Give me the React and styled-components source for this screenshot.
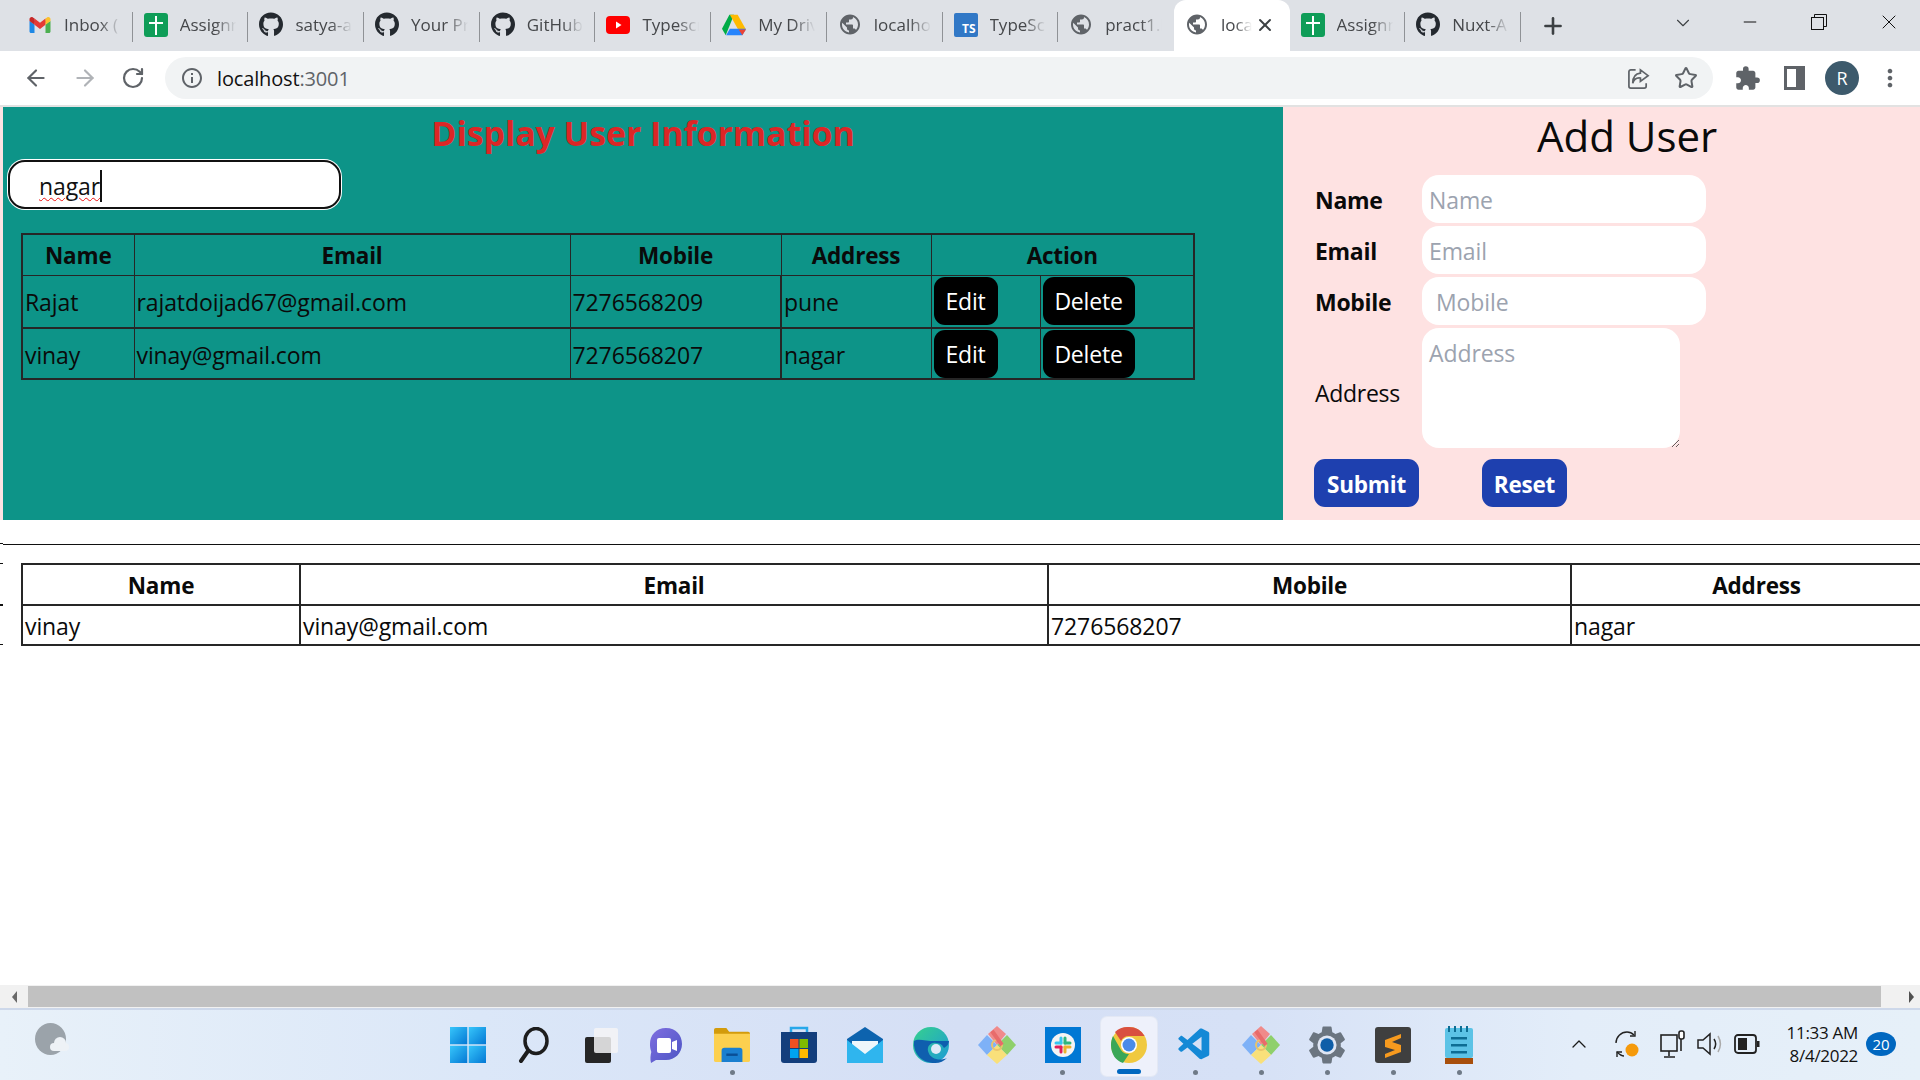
import React from 'react';
import styled, { createGlobalStyle } from 'styled-components';
import { FaGithub } from 'react-icons/fa';
import { MdPublic, MdExtension, MdMoreVert, MdInfoOutline } from 'react-icons/md';
import { VscVscode } from 'react-icons/vsc';
import { ArrowLeft, ArrowRight, RotateCw, Plus, X, Minus, ChevronDown, ChevronUp, Star } from 'lucide-react';

const Global = createGlobalStyle`
  html, body { margin: 0; padding: 0; background: #fff; overflow: hidden; }
  * { box-sizing: border-box; }
  body { font-family: "Open Sans", "Noto Sans", "Liberation Sans", sans-serif; }
`;

const Screen = styled.div`width:1920px;height:1080px;display:flex;flex-direction:column;overflow:hidden;`;

/* Browser tabs */
const TabBar = styled.div`height:51px;background:#dee1e6;display:flex;padding-left:17px;flex:none;`;
const TabItem = styled.div`
  width:115.7px;height:51px;flex:none;display:flex;align-items:center;padding-left:11px;padding-bottom:2px;position:relative;
  border-radius:${p => p.$active ? '12px 12px 0 0' : '0'};
  background:${p => p.$active ? '#fff' : 'transparent'};
  &::after{content:"";display:${p => p.$sep ? 'block' : 'none'};position:absolute;right:0;top:12px;height:30px;width:1px;background:#8f9296;}
`;
const Favicon = styled.div`width:24px;height:24px;flex:none;display:flex;align-items:center;justify-content:center;color:${p => p.$color || '#24292f'};`;
const TabTitle = styled.span`
  margin-left:12px;font-size:17px;color:#45474a;white-space:nowrap;flex:1;min-width:0;margin-right:${p => p.$right}px;
  mask-image:linear-gradient(to right,#000 ${p => p.$fade[0]}%,transparent ${p => p.$fade[1]}%);
`;
const TabClose = styled.div`position:absolute;right:15px;top:15px;color:#3c4043;display:flex;`;
const TsIcon = styled.div`width:24px;height:24px;background:#3178c6;color:#fff;font:700 12px "Open Sans",sans-serif;display:flex;align-items:flex-end;justify-content:flex-end;padding:0 2px 0 0;border-radius:2px;line-height:16px;`;
const NewTab = styled.div`margin-left:19px;width:26px;height:51px;display:flex;align-items:center;color:#3c4043;`;
const TabChevron = styled.div`margin-left:106px;width:48px;display:flex;padding-top:12px;color:#3c4043;flex:none;`;
const WinBtn = styled.div`width:${p => p.$w}px;height:44px;display:flex;align-items:center;justify-content:center;color:#111;flex:none;`;

/* Toolbar */
const Toolbar = styled.div`height:54px;background:#fff;display:flex;align-items:center;flex:none;padding-left:12px;`;
const NavBtn = styled.div`width:${p => p.$w || 48}px;margin-left:${p => p.$ml || 0}px;display:flex;justify-content:center;align-items:center;color:${p => p.$color || '#5f6368'};flex:none;`;
const Omnibox = styled.div`width:1548px;margin-left:9px;height:42px;border-radius:21px;background:#f1f3f4;display:flex;align-items:center;padding-left:15px;padding-right:15px;flex:none;`;
const UrlText = styled.div`margin-left:13px;font-size:20px;color:#111;flex:1;letter-spacing:-.15px;span{color:#5f6368;}`;
const Avatar = styled.div`width:34px;height:34px;border-radius:50%;background:#3d5a6c;color:#fff;font-size:18px;display:flex;align-items:center;justify-content:center;`;
const Rule = styled.div`height:2px;background:#e2e2e2;flex:none;`;

/* Page */
const Viewport = styled.div`flex:1;min-height:0;display:flex;overflow:hidden;background:#fff;`;
const Gutter = styled.div`width:3px;flex:none;display:flex;flex-direction:column;`;
const GutterFill = styled.div`height:413px;background:#fee2e2;flex:none;`;
const Tick = styled.div`height:${p => p.$h || 1}px;margin-top:${p => p.$top}px;background:#111;flex:none;`;
const Page = styled.div`flex:1;min-width:0;overflow:hidden;`;
const Panels = styled.div`display:grid;grid-template-columns:1280px 1fr;height:413px;`;
const ListPanel = styled.section`background:#0d9488;`;
const Title = styled.h1`margin:0;height:52px;text-align:center;color:#dc2626;font-size:34px;line-height:52px;font-weight:700;letter-spacing:-.1px;`;
const SearchBox = styled.div`
  margin:1px 0 0 5px;width:333px;height:49px;background:#fff;border:2px solid #111;border-radius:17px;box-shadow:0 0 0 1px #fff;
  display:flex;align-items:center;padding-left:29px;padding-top:2px;
`;
const Typed = styled.span`font-size:23px;line-height:32px;color:#111;border-right:2px solid #111;letter-spacing:-.1px;text-decoration:underline wavy #ee1111 1px;text-underline-offset:2px;`;
const Table = styled.table`
  border-collapse:collapse;table-layout:fixed;width:${p => p.$w}px;margin:${p => p.$m};color:#0a0a0a;
  th,td{border:${p => p.$bw || 1}px solid #262626;padding:2px 2px 0;font-size:23px;text-align:left;letter-spacing:-.1px;white-space:nowrap;overflow:hidden;}
  th{text-align:center;font-weight:700;font-size:22.5px;letter-spacing:-.2px;}
  border:2px solid #262626;
`;
const HeadRow = styled.tr`height:${p => p.$h}px;`;
const BodyRow = styled.tr`
  height:${p => p.$h}px;
  td{border-bottom:${p => p.$thick ? '2px solid #262626' : ''};}
  td:nth-child(4){border-left:2px solid #262626;}
  td:nth-child(n+5){padding-top:0;}
`;
const ActionBtn = styled.button`
  height:48px;width:${p => p.$w}px;border:0;background:#000;color:#fff;border-radius:11px;font:400 23px "Open Sans",sans-serif;letter-spacing:-.2px;padding:0;display:block;
`;
const FormPanel = styled.section`background:#fee2e2;padding-left:32px;`;
const FormTitle = styled.h2`margin:0;height:68px;font-weight:400;font-size:42px;line-height:58px;color:#0a0a0a;padding-left:222px;`;
const FormGrid = styled.div`display:grid;grid-template-columns:107px auto;row-gap:3px;align-items:center;justify-content:start;`;
const Label = styled.label`font-size:23px;font-weight:${p => p.$bold ? 700 : 400};color:#0a0a0a;letter-spacing:-.3px;padding-top:${p => p.$top || 2}px;`;
const Field = styled.input`
  width:284px;height:48px;border:0;border-radius:17px;background:#fff;font:400 23px "Open Sans",sans-serif;padding:2px 0 0 ${p => p.$pad || 7}px;outline:none;letter-spacing:-.1px;
  &::placeholder{color:#9ca3af;opacity:1;}
`;
const Area = styled.textarea`
  width:258px;height:120px;border:0;border-radius:17px;background:#fff;font:400 23px/32px "Open Sans",sans-serif;padding:9px 7px;outline:none;resize:both;display:block;letter-spacing:-.1px;
  &::placeholder{color:#9ca3af;opacity:1;}
`;
const FormActions = styled.div`display:flex;margin-top:11px;margin-left:-1px;gap:63px;`;
const PrimaryBtn = styled.button`height:48px;width:${p => p.$w}px;border:0;border-radius:11px;background:#1e40af;color:#fff;font:700 22.500px "Open Sans",sans-serif;letter-spacing:-.2px;padding:2px 0 0;`;
const Divider = styled.hr`height:1px;border:0;background:#111;margin:24px 0 0;`;

/* Scrollbar */
const ScrollBar = styled.div`height:23px;flex:none;background:#f1f1f1;display:flex;align-items:stretch;`;
const ScrollArrow = styled.div`flex:${p => p.$end ? 1 : 'none'};width:28px;display:flex;align-items:center;justify-content:${p => p.$end ? 'flex-start' : 'center'};padding-left:${p => p.$end ? 28 : 0}px;`;
const ArrowGlyph = styled.div`width:0;height:0;border-top:6px solid transparent;border-bottom:6px solid transparent;${p => p.$dir === 'l' ? 'border-right:5px solid #6a6a6a;' : 'border-left:5px solid #505050;'}`;
const ScrollThumb = styled.div`width:1853px;background:#c1c1c1;margin:1px 0 1px;flex:none;`;

/* Taskbar */
const Taskbar = styled.div`
  height:72px;flex:none;display:grid;grid-template-columns:435px 1058px 1fr;
  background:linear-gradient(90deg,#e8f1f9 0%,#dbe7f8 25%,#d5dff5 50%,#d6e1f6 65%,#e3edf9 82%,#e6f0f9 100%);
  border-top:2px solid #cdd8ea;
`;
const WeatherSlot = styled.div`padding:13px 0 0 35px;`;
const Tiles = styled.div`display:flex;`;
const Tile = styled.div`
  width:66.100px;flex:none;display:flex;flex-direction:column;align-items:center;padding-top:17px;position:relative;
  &::before{content:"";display:${p => p.$active ? 'block' : 'none'};position:absolute;left:5px;right:5px;top:7px;bottom:4px;background:#eef1fb;border-radius:6px;box-shadow:0 0 0 1px #e3e8f4;}
  > *{position:relative;}
`;
const TileIcon = styled.div`width:36px;height:36px;display:flex;align-items:center;justify-content:center;svg{flex:none;}`;
const RunDot = styled.div`
  margin-top:${p => p.$active ? 6 : 7}px;height:5px;border-radius:3px;
  width:${p => p.$active ? 24 : 5}px;background:${p => p.$active ? '#0067c0' : (p.$on ? '#6f7a87' : 'transparent')};
`;
const Tray = styled.div`display:flex;align-items:center;padding-left:68px;padding-bottom:3px;`;
const TraySlot = styled.div`width:${p => p.$w}px;display:flex;justify-content:center;color:#1a1a1a;flex:none;`;
const Clock = styled.div`width:95px;text-align:right;font-size:17px;line-height:23px;color:#111;flex:none;letter-spacing:-.3px;`;
const Badge = styled.div`margin-left:8px;width:30px;height:24px;border-radius:50%;background:#0067c0;color:#fff;font-size:15px;display:flex;align-items:center;justify-content:center;flex:none;`;

/* Drawn icons */
const Gmail = () => (
  <svg width="26" height="26" viewBox="0 0 48 48"><path fill="#4caf50" d="M45,16.2l-5,2.75l-5,4.75L35,40h7c1.657,0,3-1.343,3-3V16.2z"/><path fill="#1e88e5" d="M3,16.2l3.614,1.71L13,23.7V40H6c-1.657,0-3-1.343-3-3V16.2z"/><polygon fill="#e53935" points="35,11.2 24,19.45 13,11.2 12,17 13,23.7 24,31.95 35,23.7 36,17"/><path fill="#c62828" d="M3,12.298V16.2l10,7.5V11.2L9.876,8.859C9.132,8.301,8.228,8,7.298,8h0C4.924,8,3,9.924,3,12.298z"/><path fill="#fbc02d" d="M45,12.298V16.2l-10,7.5V11.2l3.124-2.341C38.868,8.301,39.772,8,40.702,8h0C43.076,8,45,9.924,45,12.298z"/></svg>
);
const Sheets = () => (
  <svg width="24" height="24" viewBox="0 0 24 24"><rect width="24" height="24" rx="3" fill="#0f9d58"/><path d="M11 3h2v6h6v2h-6v11h-2V11H5V9h6z" fill="#fff"/></svg>
);
const YouTube = () => (
  <svg width="24" height="24" viewBox="0 0 24 24"><rect y="3" width="24" height="18" rx="4" fill="#f00"/><path d="M10 8.500l5.500 3.500-5.500 3.500z" fill="#fff"/></svg>
);
const Drive = () => (
  <svg width="26" height="24" viewBox="0 0 26 24"><path d="M13 1l-5 0-8 15 4 7z" fill="#00ac47"/><path d="M8.500 1h8.500l9 16h-8.500z" fill="#ffba00"/><path d="M4.500 23l4-7h17.500l-4 7z" fill="#2684fc"/><path d="M18 17h8l-4 6z" fill="#ea4335"/></svg>
);
const WindowsLogo = () => (
  <svg width="36" height="36" viewBox="0 0 36 36"><defs><linearGradient id="w1" x1="0" y1="0" x2="1" y2="1"><stop offset="0" stopColor="#37c6fb"/><stop offset="1" stopColor="#0478d4"/></linearGradient></defs><rect x="0" width="17.300" height="17.300" fill="url(#w1)"/><rect x="18.700" width="17.300" height="17.300" fill="url(#w1)"/><rect y="18.700" width="17.300" height="17.300" fill="url(#w1)"/><rect x="18.700" y="18.700" width="17.300" height="17.300" fill="url(#w1)"/></svg>
);
const SearchGlyph = () => (
  <svg width="36" height="36" viewBox="0 0 36 36" fill="none" stroke="#1d1d1d"><ellipse cx="20" cy="14" rx="11" ry="12.500" strokeWidth="3.500"/><path d="M12 24L5 34" strokeWidth="4" strokeLinecap="round"/></svg>
);
const TaskView = () => (
  <svg width="36" height="36" viewBox="0 0 36 36"><rect x="3" y="10" width="26" height="26" rx="2" fill="#262626"/><rect x="12" y="1" width="24" height="25" rx="2" fill="#f4f4f6" fillOpacity=".85"/></svg>
);
const Chat = () => (
  <svg width="36" height="36" viewBox="0 0 36 36"><defs><linearGradient id="c1" x1="0" y1="0" x2="1" y2="1"><stop offset="0" stopColor="#7f6ee0"/><stop offset="1" stopColor="#4c55c4"/></linearGradient></defs><path d="M18 1c10 0 16 7 16 16s-7 16-16 16H8l-5 3c-1-4-.5-8 .3-11C2 21 2 19 2 17 2 8 8 1 18 1z" fill="url(#c1)"/><rect x="9" y="11" width="14" height="15" rx="2" fill="#fff"/><path d="M24 15l5-2v11l-5-2z" fill="#fff"/></svg>
);
const Explorer = () => (
  <svg width="36" height="36" viewBox="0 0 38 36"><path d="M0 2a2 2 0 012-2h11l3 4h20a2 2 0 012 2v4H0z" fill="#d39b0b"/><path d="M0 6h38v28a2 2 0 01-2 2H2a2 2 0 01-2-2z" fill="#fcd04f"/><path d="M8 24a3 3 0 013-3h16a3 3 0 013 3v12H8z" fill="#1a7fd0"/><rect x="13" y="27" width="12" height="2.500" fill="#0a4e96"/></svg>
);
const Store = () => (
  <svg width="36" height="38" viewBox="0 0 36 38"><path d="M10 6V2h16v4" fill="none" stroke="#28a8ea" strokeWidth="2.500"/><path d="M0 6h36v28a3 3 0 01-3 3H3a3 3 0 01-3-3z" fill="#133e7c"/><rect x="9" y="13" width="8.500" height="9" fill="#f25022"/><rect x="18.500" y="13" width="8.500" height="9" fill="#7fba00"/><rect x="9" y="23" width="8.500" height="9" fill="#00a4ef"/><rect x="18.500" y="23" width="8.500" height="9" fill="#ffb900"/></svg>
);
const Mail = () => (
  <svg width="36" height="36" viewBox="0 0 36 36"><path d="M0 12L18 0l18 12v24H0z" fill="#0d63ae"/><path d="M5 14h26v8L18 30 5 22z" fill="#eef6fb"/><path d="M0 13l18 14 18-14v23H0z" fill="#2fb5ee"/></svg>
);
const Edge = () => (
  <svg width="36" height="38" viewBox="0 0 36 36"><defs><linearGradient id="e1" x1="0" y1="0" x2="1" y2="1"><stop offset="0" stopColor="#36d18d"/><stop offset="1" stopColor="#1c9ad6"/></linearGradient></defs><circle cx="18" cy="18" r="18" fill="url(#e1)"/><path d="M1 14C0 27 9 36 22 36c5 0 9-2 12-5-6 3-17 2-19-7-1-5 3-9 8-8 5 0 7 3 8 5 3-2 5-4 5-7H22C12 14 5 11 1 14z" fill="#0f5fae"/><ellipse cx="23" cy="22" rx="5" ry="5" fill="#dfeaf8"/></svg>
);
const Gem = () => (
  <svg width="38" height="38" viewBox="0 0 38 38"><path d="M10 8l9-8 9 8-9 11z" fill="#f08a8a"/><path d="M0 19l9-10 10 10-10 10z" fill="#7eb1f7"/><path d="M38 19l-9-10-10 10 10 10z" fill="#8fd06b"/><path d="M9 29l10-10 10 10-10 9z" fill="#f9e07a"/><circle cx="19" cy="19" r="5" fill="none" stroke="#e9c46a" strokeWidth="2"/><path d="M14 5l10 14" stroke="#e86b6b" strokeWidth="4"/></svg>
);
const Slack = () => (
  <svg width="36" height="36" viewBox="0 0 36 36"><rect width="36" height="36" fill="#0078d4"/><circle cx="18" cy="18" r="12" fill="#f4f4f4"/><g strokeWidth="3" strokeLinecap="round"><path d="M16 11v5" stroke="#36c5f0"/><path d="M11 16h5" stroke="#36c5f0"/><path d="M20 11v5" stroke="#2eb67d"/><path d="M20 16h5" stroke="#2eb67d"/><path d="M20 20v5" stroke="#ecb22e"/><path d="M20 20h5" stroke="#ecb22e"/><path d="M16 20v5" stroke="#e01e5a"/><path d="M11 20h5" stroke="#e01e5a"/></g></svg>
);
const Chrome = () => (
  <svg width="36" height="38" viewBox="0 0 36 36"><circle cx="18" cy="18" r="18" fill="#f0c93f"/><path d="M18 0a18 18 0 0115.600 9H18a9 9 0 00-8 5L4 5a18 18 0 0114-5z" fill="#d9503f"/><path d="M2 9l8 14a9 9 0 008 4l-6 9C5 34 0 27 0 18c0-3 .7-6 2-9z" fill="#3aa757"/><circle cx="18" cy="18" r="8" fill="#fff"/><circle cx="18" cy="18" r="6.500" fill="#4a8be8"/></svg>
);
const Sublime = () => (
  <svg width="36" height="36" viewBox="0 0 36 36"><rect width="36" height="36" rx="3" fill="#3f3f3f"/><path d="M26 7L10 13v7l10 3-10 4v4l16-6v-7l-9-3 9-4z" fill="#f79a1e"/></svg>
);
const Notepad = () => (
  <svg width="28" height="38" viewBox="0 0 28 38"><rect y="2" width="28" height="30" rx="2" fill="#5cc3e6"/><rect y="32" width="28" height="6" fill="#a84f0c"/><g fill="#0d6d93"><rect x="3" y="0" width="2" height="6"/><rect x="9" y="0" width="2" height="6"/><rect x="15" y="0" width="2" height="6"/><rect x="21" y="0" width="2" height="6"/><rect x="6" y="11" width="16" height="2.500"/><rect x="6" y="18" width="16" height="2.500"/><rect x="6" y="25" width="16" height="2.500"/></g></svg>
);
const Weather = () => (
  <svg width="35" height="32" viewBox="0 0 35 32"><ellipse cx="15.500" cy="16" rx="15.500" ry="16" fill="#9ba3aa"/><g fill="#eef2f6"><circle cx="25" cy="20" r="6"/><circle cx="19" cy="24" r="4"/><circle cx="30" cy="24" r="4"/><rect x="19" y="23" width="11" height="5"/></g></svg>
);
const Sync = () => (
  <svg width="26" height="28" viewBox="0 0 26 28" fill="none" stroke="#222" strokeWidth="1.400"><path d="M2 13c0-6 5-11 11-11 3 0 5 1 7 3"/><path d="M21 1v5h-5"/><path d="M3 27v-5h5"/><path d="M3 22c2 2 4 4 7 4"/><circle cx="18" cy="20" r="6.500" fill="#f59a0c" stroke="none"/></svg>
);
const Network = () => (
  <svg width="26" height="28" viewBox="0 0 26 28" fill="none" stroke="#222" strokeWidth="1.600"><rect x="1" y="5" width="16" height="16"/><path d="M9 21v5M4 27h11"/><rect x="19" y="1" width="5" height="8" rx="2" fill="#fff"/><path d="M21 9v12"/></svg>
);
const Speaker = () => (
  <svg width="28" height="26" viewBox="0 0 28 26" fill="none" stroke="#222" strokeWidth="1.500"><path d="M2 9h5l7-6v20l-7-6H2z"/><path d="M18 8c2 3 2 7 0 10"/><path d="M22 5c3 5 3 11 0 16" stroke="#aaa"/></svg>
);
const Battery = () => (
  <svg width="26" height="22" viewBox="0 0 26 22"><rect x="1" y="2" width="21" height="18" rx="3" fill="none" stroke="#222" strokeWidth="1.800"/><rect x="4" y="5" width="9" height="12" fill="#222"/><rect x="23" y="8" width="2.500" height="6" fill="#222"/></svg>
);
const SidePanel = () => (
  <svg width="21" height="24" viewBox="0 0 21 24"><rect x="1.500" y="1.500" width="18" height="21" fill="none" stroke="#5f6368" strokeWidth="3"/><rect x="12" y="2" width="7" height="20" fill="#5f6368"/></svg>
);
const Share = () => (
  <svg width="23" height="23" viewBox="0 0 24 24" fill="none" stroke="#5f6368" strokeWidth="1.800"><path d="M9 3H4a2 2 0 00-2 2v15a2 2 0 002 2h14a2 2 0 002-2v-3"/><path d="M14 3l8 6-8 6v-3.500C10 11 7 13 6 17c0-6 3-10 8-10.500z"/></svg>
);
const Restore = () => (
  <svg width="16" height="16" viewBox="0 0 16 16" fill="none" stroke="#111"><rect x=".5" y="3.500" width="12" height="12" fill="#dee1e6"/><path d="M3.500 3.500v-3h12v12h-3"/></svg>
);
const Gear = () => (
  <svg width="46" height="46" viewBox="0 0 24 24"><path fill="#6b7580" d="M19.140 12.940c.04-.3.060-.61.060-.94 0-.32-.02-.64-.07-.94l2.030-1.580a.49.49 0 00.12-.61l-1.920-3.320a.488.488 0 00-.59-.22l-2.390.96c-.5-.38-1.030-.7-1.620-.94l-.36-2.540a.484.484 0 00-.48-.41h-3.840c-.24 0-.43.170-.47.410l-.36 2.540c-.59.240-1.130.57-1.620.94l-2.390-.96c-.22-.08-.47 0-.59.220L2.740 8.870c-.12.210-.08.470.12.610l2.030 1.580c-.05.300-.09.630-.09.940s.02.640.07.940l-2.030 1.580a.49.49 0 00-.12.610l1.920 3.320c.12.220.37.290.59.220l2.390-.96c.5.380 1.030.7 1.620.94l.36 2.540c.05.240.24.410.48.410h3.840c.24 0 .44-.17.47-.41l.36-2.540c.59-.24 1.130-.56 1.620-.94l2.390.96c.22.080.47 0 .59-.22l1.920-3.320c.12-.22.070-.47-.12-.61l-2.010-1.580z"/><circle cx="12" cy="12" r="5" fill="#dfe6f4"/><circle cx="12" cy="12" r="3.500" fill="#0f5ea8"/></svg>
);

const tabs = [
  { icon: <Gmail />, title: 'Inbox (', sep: true },
  { icon: <Sheets />, title: 'Assignm', sep: true },
  { icon: <FaGithub size={25} />, title: 'satya-a', sep: true },
  { icon: <FaGithub size={25} />, title: 'Your Pr', sep: true },
  { icon: <FaGithub size={25} />, title: 'GitHub', sep: true },
  { icon: <YouTube />, title: 'Typescr', sep: true },
  { icon: <Drive />, title: 'My Driv', sep: true },
  { icon: <MdPublic size={27} color="#5f6368" />, title: 'localho', sep: true },
  { icon: <TsIcon>TS</TsIcon>, title: 'TypeSc', sep: true },
  { icon: <MdPublic size={27} color="#5f6368" />, title: 'pract1.l', sep: false },
  { icon: <MdPublic size={27} color="#5f6368" />, title: 'loca', active: true, sep: false },
  { icon: <Sheets />, title: 'Assignm', sep: true },
  { icon: <FaGithub size={25} />, title: 'Nuxt-A', sep: true },
];

const taskIcons = [
  { icon: <WindowsLogo /> }, { icon: <SearchGlyph /> }, { icon: <TaskView /> }, { icon: <Chat /> },
  { icon: <Explorer />, on: true }, { icon: <Store /> }, { icon: <Mail /> }, { icon: <Edge /> },
  { icon: <Gem /> }, { icon: <Slack />, on: true }, { icon: <Chrome />, active: true },
  { icon: <VscVscode size={38} color="#1489d6" />, on: true }, { icon: <Gem />, on: true },
  { icon: <Gear />, on: true }, { icon: <Sublime />, on: true }, { icon: <Notepad />, on: true },
];

const rows = [
  { name: 'Rajat', email: 'rajatdoijad67@gmail.com', mobile: '7276568209', address: 'pune' },
  { name: 'vinay', email: 'vinay@gmail.com', mobile: '7276568207', address: 'nagar' },
];

export default function App() {
  return (
    <Screen>
      <Global />
      <TabBar>
        {tabs.map((t, i) => (
          <TabItem key={i} $active={t.active} $sep={t.sep}>
            <Favicon>{t.icon}</Favicon>
            <TabTitle $right={t.active ? 38 : 1} $fade={t.active ? [45, 100] : [52, 84]}>{t.title}</TabTitle>
            {t.active && <TabClose><X size={20} strokeWidth={2.4} /></TabClose>}
          </TabItem>
        ))}
        <NewTab><Plus size={26} strokeWidth={2.4} /></NewTab>
        <TabChevron><ChevronDown size={22} strokeWidth={1.2} /></TabChevron>
        <WinBtn $w={60}><Minus size={20} strokeWidth={1.2} /></WinBtn>
        <WinBtn $w={78}><Restore /></WinBtn>
        <WinBtn $w={62}><X size={24} strokeWidth={1} /></WinBtn>
      </TabBar>
      <Toolbar>
        <NavBtn $w={48}><ArrowLeft size={26} strokeWidth={2} /></NavBtn>
        <NavBtn $w={49} $color="#b0b3b7"><ArrowRight size={26} strokeWidth={2} /></NavBtn>
        <NavBtn $w={47}><RotateCw size={24} strokeWidth={2.2} /></NavBtn>
        <Omnibox>
          <NavBtn $w={24}><MdInfoOutline size={24} /></NavBtn>
          <UrlText>localhost<span>:3001</span></UrlText>
          <NavBtn $w={24}><Share /></NavBtn>
          <NavBtn $w={24} $ml={24}><Star size={24} strokeWidth={2} /></NavBtn>
        </Omnibox>
        <NavBtn $w={48} $ml={10}><MdExtension size={27} /></NavBtn>
        <NavBtn $w={46}><SidePanel /></NavBtn>
        <NavBtn $w={50}><Avatar>R</Avatar></NavBtn>
        <NavBtn $w={46}><MdMoreVert size={28} /></NavBtn>
      </Toolbar>
      <Rule />
      <Viewport>
        <Gutter>
          <GutterFill />
          <Tick $top={23} />
          <Tick $top={19} />
          <Tick $top={40} $h={2} />
          <Tick $top={38} />
        </Gutter>
        <Page>
          <Panels>
            <ListPanel>
              <Title>Display User Information</Title>
              <SearchBox><Typed>nagar</Typed></SearchBox>
              <Table $w={1172} $m="24px 0 0 18px">
                <colgroup>
                  <col width="112" /><col width="436" /><col width="211" /><col width="150" /><col width="109" /><col width="154" />
                </colgroup>
                <thead>
                  <HeadRow $h={41}>
                    <th>Name</th><th>Email</th><th>Mobile</th><th>Address</th><th colSpan={2}>Action</th>
                  </HeadRow>
                </thead>
                <tbody>
                  {rows.map((r, i) => (
                    <BodyRow key={r.name} $h={i === 0 ? 53 : 51} $thick={i === 0}>
                      <td>{r.name}</td><td>{r.email}</td><td>{r.mobile}</td><td>{r.address}</td>
                      <td><ActionBtn $w={64}>Edit</ActionBtn></td>
                      <td><ActionBtn $w={92}>Delete</ActionBtn></td>
                    </BodyRow>
                  ))}
                </tbody>
              </Table>
            </ListPanel>
            <FormPanel>
              <FormTitle>Add User</FormTitle>
              <FormGrid>
                <Label $bold>Name</Label><Field placeholder="Name" />
                <Label $bold>Email</Label><Field placeholder="Email" />
                <Label $bold>Mobile</Label><Field placeholder="Mobile" $pad={14} />
                <Label $top={10}>Address</Label><Area placeholder="Address" />
              </FormGrid>
              <FormActions>
                <PrimaryBtn $w={105}>Submit</PrimaryBtn>
                <PrimaryBtn $w={85}>Reset</PrimaryBtn>
              </FormActions>
            </FormPanel>
          </Panels>
          <Divider />
          <Table $w={1920} $bw={2} $m="18px 0 0 18px">
            <colgroup>
              <col width="278" /><col width="748" /><col width="523" /><col width="371" />
            </colgroup>
            <thead>
              <HeadRow $h={41}><th>Name</th><th>Email</th><th>Mobile</th><th>Address</th></HeadRow>
            </thead>
            <tbody>
              <HeadRow $h={40}><td>vinay</td><td>vinay@gmail.com</td><td>7276568207</td><td>nagar</td></HeadRow>
            </tbody>
          </Table>
        </Page>
      </Viewport>
      <ScrollBar>
        <ScrollArrow><ArrowGlyph $dir="l" /></ScrollArrow>
        <ScrollThumb />
        <ScrollArrow $end><ArrowGlyph $dir="r" /></ScrollArrow>
      </ScrollBar>
      <Taskbar>
        <WeatherSlot><Weather /></WeatherSlot>
        <Tiles>
          {taskIcons.map((t, i) => (
            <Tile key={i} $active={t.active}>
              <TileIcon>{t.icon}</TileIcon>
              <RunDot $active={t.active} $on={t.on} />
            </Tile>
          ))}
        </Tiles>
        <Tray>
          <TraySlot $w={36}><ChevronUp size={24} strokeWidth={1.3} /></TraySlot>
          <TraySlot $w={60}><Sync /></TraySlot>
          <TraySlot $w={32}><Network /></TraySlot>
          <TraySlot $w={42}><Speaker /></TraySlot>
          <TraySlot $w={32}><Battery /></TraySlot>
          <Clock>11:33 AM<br />8/4/2022</Clock>
          <Badge>20</Badge>
        </Tray>
      </Taskbar>
    </Screen>
  );
}
